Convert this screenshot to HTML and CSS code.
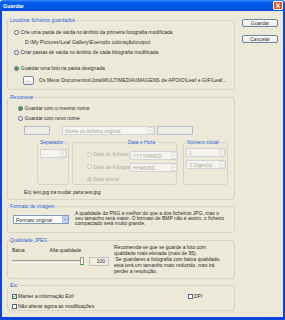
FILE: index.html
```html
<!DOCTYPE html>
<html>
<head>
    <meta charset="utf-8">
    <title>Guardar</title>
    <link rel="stylesheet" href="styles.css">
</head>
<body>
    <div class="window">
        <div class="titlebar">
            <span class="title">Guardar</span>
            <span class="close"><svg viewBox="0 0 8 8" width="8" height="7"><path d="M2 1.5L6 6.5M6 1.5L2 6.5" stroke="#fff" stroke-width="1.2"/></svg></span>
        </div>
        <div class="frame">
            <div class="main">
                <fieldset class="grp g1">
                    <legend>Localizar ficheiros guardados</legend>
                    <div class="in">
                        <div class="row"><span class="radio"></span>Crie uma pasta de saída no âmbito da primeira fotografia modificada</div>
                        <div class="row path">D:\My Pictures\Leaf Gallery\Exemplo coloração\output</div>
                        <div class="row"><span class="radio"></span>Criar pastas de saída no âmbito de cada fotografia modificada</div>
                        <div class="row r3"><span class="radio on"></span>Guardar uma foto na pasta designada</div>
                        <div class="row dest"><span class="btn dots">...</span><span class="destpath">Os Meus Documentos\Jota\MULTIMEDIA\IMAGENS de APOIO\Leaf e GIF\Leaf...</span></div>
                    </div>
                </fieldset>

                <fieldset class="grp g2">
                    <legend>Renomear</legend>
                    <div class="in">
                        <div class="row"><span class="radio on"></span>Guardar com o mesmo nome</div>
                        <div class="row"><span class="radio"></span>Guardar com novo nome</div>
                        <div class="names">
                            <span class="text off prefix"></span>
                            <span class="combo off basename"><span class="val">Nome do ficheiro original</span><span class="arrow"><svg viewBox="0 0 6 6" width="5" height="5"><path d="M1.5 2.2L3 3.7L4.5 2.2" fill="none" stroke="#c9c7ba" stroke-width="0.9"/></svg></span></span>
                            <span class="text off suffix"></span>
                        </div>
                        <div class="subs">
                            <fieldset class="grp sep">
                                <legend>Separador</legend>
                                <div class="in">
                                    <span class="combo off"><span class="val">-</span><span class="arrow"><svg viewBox="0 0 6 6" width="5" height="5"><path d="M1.5 2.2L3 3.7L4.5 2.2" fill="none" stroke="#c9c7ba" stroke-width="0.9"/></svg></span></span>
                                </div>
                            </fieldset>
                            <fieldset class="grp date">
                                <legend>Data e Hora</legend>
                                <div class="in">
                                    <div class="opts">
                                        <div class="row off"><span class="radio off"></span>Data do ficheiro</div>
                                        <div class="row off"><span class="radio off"></span>Data da Fotogra</div>
                                        <div class="row off"><span class="radio off on"></span>Data actual</div>
                                    </div>
                                    <div class="fmts">
                                        <span class="combo off"><span class="val">YYYYMMDD</span><span class="arrow"><svg viewBox="0 0 6 6" width="5" height="5"><path d="M1.5 2.2L3 3.7L4.5 2.2" fill="none" stroke="#c9c7ba" stroke-width="0.9"/></svg></span></span>
                                        <span class="combo off"><span class="val">HHMMSS</span><span class="arrow"><svg viewBox="0 0 6 6" width="5" height="5"><path d="M1.5 2.2L3 3.7L4.5 2.2" fill="none" stroke="#c9c7ba" stroke-width="0.9"/></svg></span></span>
                                    </div>
                                </div>
                            </fieldset>
                            <fieldset class="grp num">
                                <legend>Número inicial</legend>
                                <div class="in">
                                    <span class="combo off spin"><span class="val">1</span><span class="arrow"><svg viewBox="0 0 6 8" width="5" height="7"><path d="M1.8 3L3 1.8L4.2 3M1.8 5L3 6.2L4.2 5" fill="none" stroke="#c9c7ba" stroke-width="0.8"/></svg></span></span>
                                    <span class="combo off"><span class="val">3 Dígito(s)</span><span class="arrow"><svg viewBox="0 0 6 6" width="5" height="5"><path d="M1.5 2.2L3 3.7L4.5 2.2" fill="none" stroke="#c9c7ba" stroke-width="0.9"/></svg></span></span>
                                </div>
                            </fieldset>
                        </div>
                        <div class="example">Ex) test.jpg irá mudar para test.jpg</div>
                    </div>
                </fieldset>

                <fieldset class="grp g3">
                    <legend>Formato de imagem</legend>
                    <div class="in">
                        <span class="combo fmt"><span class="val">Formato original</span><span class="arrow"><svg viewBox="0 0 6 6" width="5" height="5"><path d="M1.5 2.2L3 3.7L4.5 2.2" fill="none" stroke="#4d6185" stroke-width="1"/></svg></span></span>
                        <p class="note">A qualidade do PNG é melhor do que a dos ficheiros JPG, mas o<br>seu tamanho será maior. O formato de BMP não é assim, o ficheiro<br>compactado será muito grande.</p>
                    </div>
                </fieldset>

                <fieldset class="grp g4">
                    <legend>Qualidade JPEG</legend>
                    <div class="in">
                        <div class="quality">
                            <div class="labels"><span>Baixa</span><span>Alta qualidade</span></div>
                            <div class="slide">
                                <span class="track"><span class="thumb"></span></span>
                                <span class="text value">100</span>
                            </div>
                        </div>
                        <p class="note jpeg">Recomenda-se que se guarde a foto com<br>qualidade mais elevada (mais de 95).<br>&nbsp;Se guardares a fotografia com baixa qualidade,<br>esta terá um tamanho mais reduzido, mas irá<br>perder a resolução.</p>
                    </div>
                </fieldset>

                <fieldset class="grp g5">
                    <legend>Etc.</legend>
                    <div class="in">
                        <div class="row"><span class="check on"><svg viewBox="0 0 5 5" width="5" height="5"><path d="M1 2.4L2 3.4L4 1.3" fill="none" stroke="#21a121" stroke-width="0.9"/></svg></span>Manter a informação Exif</div>
                        <div class="row"><span class="check"></span>DPI</div>
                        <div class="row"><span class="check"></span>Não alterar agora as modificações</div>
                    </div>
                </fieldset>
            </div>
            <div class="side">
                <span class="btn">Guardar</span>
                <span class="btn">Cancelar</span>
            </div>
        </div>
    </div>
</body>
</html>
```

FILE: styles.css
```css
* { box-sizing: border-box; }
body { margin: 0; font-family: "Liberation Sans", Arial, sans-serif; font-size: 5px; color: #2b2b2b; }
.window { width: 285px; height: 320px; display: flex; flex-direction: column; }

.titlebar { height: 11px; display: flex; align-items: center; justify-content: space-between; padding: 0 2px 0 3px; border-radius: 3px 3px 0 0; background: linear-gradient(#3d8ffb 0, #0a5fea 2px, #0058e6 60%, #0349d8 100%); }
.title { color: #fff; font-weight: bold; font-size: 5.4px; }
.close { width: 10px; height: 9px; display: flex; align-items: center; justify-content: center; background: #e2572f; border: 1px solid #fff; border-radius: 1px; }

.frame { flex: 1; display: flex; background: #ece9d8; border: solid #0a46da; border-width: 0 2px 3px; padding: 6px 5px 0 5px; }
.main { width: 228px; }
.side { margin-left: 7px; padding-top: 2px; display: flex; flex-direction: column; gap: 8px; }

.btn { width: 36px; height: 8px; display: flex; align-items: center; justify-content: center; border: 1px solid #6f84a6; border-radius: 2px; background: linear-gradient(#fff, #ecebe5); color: #333; }
.btn.dots { width: 11px; height: 9px; }

.grp { margin: 0; padding: 0; border: 1px solid #d6d3c2; border-radius: 3px; min-width: 0; }
.grp legend { margin-left: 1px; padding: 0 1px; height: 6px; line-height: 6px; color: #2a5fd8; }

.row { display: flex; align-items: center; height: 10px; white-space: nowrap; }
.row.off { color: #aca899; }
.path, .destpath { letter-spacing: 0.1px; }

.radio { width: 5px; height: 5px; margin-right: 1.5px; border: 1px solid #4a6890; border-radius: 50%; background: #fff; flex: none; }
.radio.on { background: radial-gradient(circle, #21a121 0 1.1px, #fff 1.5px); }
.radio.off { border-color: #cac8bb; background: #f3f2ea; }
.radio.off.on { background: radial-gradient(circle, #cac8bb 0 1.1px, #f3f2ea 1.5px); }

.check { width: 5px; height: 5px; margin-right: 1px; border: 1px solid #4a6890; background: #fff; display: flex; flex: none; }
.check svg { margin: -1px; }

.text { display: block; height: 9px; border: 1px solid #7f9db9; background: #fff; }
.text.off { border-color: #aebad0; background: #efede3; }

.combo { display: flex; align-items: center; height: 9px; border: 1px solid #7f9db9; background: #fff; padding-left: 2px; white-space: nowrap; overflow: hidden; }
.combo .val { flex: 1; overflow: hidden; }
.combo .arrow { width: 6px; height: 7px; display: flex; align-items: center; justify-content: center; background: #c3d3fd; border: 1px solid #b3c6f3; border-radius: 1px; }
.combo.off { border-color: #cfd3da; background: #f5f4ee; color: #aca899; }
.combo.off .arrow { background: #f4f3ee; border-color: #e2e0d6; }

/* localizar */
.g1 { height: 73px; }
.g1 .in { padding: 4px 0 0 6px; }
.g1 .path { margin-left: 11px; }
.g1 .r3 { margin-top: 6px; }
.g1 .dest { margin: 2px 0 0 9px; }
.destpath { margin-left: 5px; }

/* renomear */
.g2 { height: 106px; margin-top: 4px; }
.g2 .in { padding: 3px 0 0 10px; }
.names { display: flex; margin: 3px 0 0 6px; height: 9px; }
.prefix { width: 26px; }
.basename { width: 93px; margin-left: 12px; }
.basename .arrow { width: 7px; }
.suffix { width: 36px; margin-left: 2px; }
.subs { display: flex; margin: 4px 0 0 19px; }
.subs .grp { height: 46px; }
.sep { width: 32px; }
.sep .in { padding: 4px 0 0 2px; }
.sep .combo { width: 27px; }
.date { width: 105px; margin-left: 3px; }
.date legend { margin-left: 54px; }
.date .in { display: flex; }
.opts { width: 50px; padding: 1px 0 0 4px; display: flex; flex-direction: column; gap: 2.5px; }
.fmts, .num .in { display: flex; flex-direction: column; gap: 3px; padding-top: 3px; }
.fmts .combo { width: 48px; }
.num { width: 45px; margin-left: 6px; }
.num legend { margin-left: 2px; }
.num .in { padding-left: 2px; }
.num .combo { width: 40px; }
.spin .arrow { height: 7px; }
.example { margin: 4px 0 0 6px; height: 6px; line-height: 6px; }

/* formato */
.g3 { height: 30px; margin-top: 3px; }
.g3 .in { display: flex; padding: 1.5px 0 0 5px; }
.fmt { width: 56px; margin-top: 4.5px; }
.note { margin: 0 0 0 6px; line-height: 5px; white-space: nowrap; }

/* qualidade */
.g4 { height: 42px; margin-top: 4px; }
.g4 .in { display: flex; padding-left: 4px; }
.quality { width: 97px; }
.labels { display: flex; gap: 25px; height: 6px; line-height: 6px; margin-top: 4px; }
.slide { display: flex; align-items: center; height: 10px; margin-top: 3px; }
.track { width: 72px; height: 3px; display: flex; align-items: center; justify-content: flex-end; border-top: 1px solid #a2a08f; border-bottom: 1px solid #fff; background: #dcdace; }
.thumb { width: 4px; height: 8px; border: 1px solid #9c9a8c; border-bottom: 1.5px solid #21a121; background: #f7f7f2; border-radius: 1px; }
.value { width: 20px; margin-left: 5px; padding-right: 3px; line-height: 7px; text-align: right; border-color: #c5c3b6; background: #f0eee4; }
.jpeg { margin: 1px 0 0 5px; line-height: 6px; }

/* etc */
.g5 { height: 29px; margin-top: 3px; }
.g5 .in { display: grid; grid-template-columns: 176px auto; padding: 3px 0 0 4px; }
```
